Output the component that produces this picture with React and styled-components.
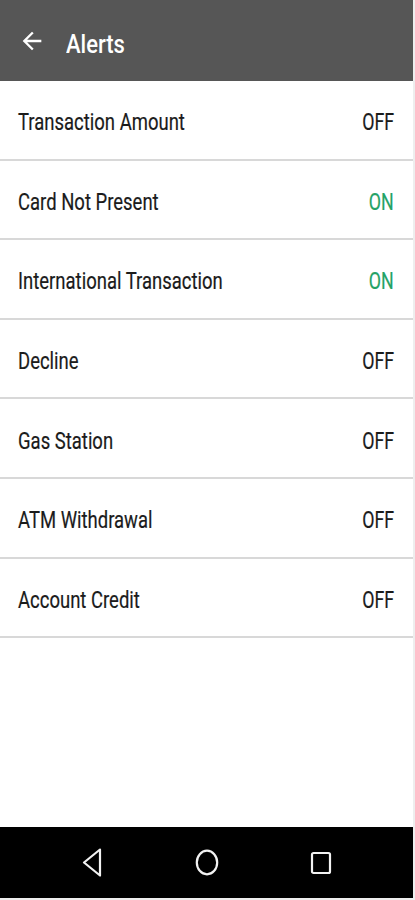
import React from 'react';
import styled, { createGlobalStyle } from 'styled-components';

const GlobalStyle = createGlobalStyle`
    html, body {
        margin: 0;
        padding: 0;
        background: #eeeeee;
    }
    body {
        font-family: Roboto, "Noto Sans", "Liberation Sans", sans-serif;
    }
`;

const Screen = styled.div`
    width: 413px;
    height: 898px;
    background: #ffffff;
    display: flex;
    flex-direction: column;
    overflow: hidden;
`;

const Toolbar = styled.header`
    height: 81px;
    flex-shrink: 0;
    background: #565656;
    display: flex;
    align-items: center;
    padding-left: 18px;
`;

const BackButton = styled.button`
    border: none;
    background: transparent;
    padding: 0;
    width: 28px;
    height: 28px;
    display: flex;
    color: #ffffff;
    cursor: pointer;
`;

const Title = styled.h1`
    margin: 0 0 0 20px;
    font-size: 25px;
    font-weight: 500;
    color: #ffffff;
    transform: scaleX(0.88);
    transform-origin: left center;
    line-height: 1;
    padding-top: 8px;
`;

const List = styled.ul`
    list-style: none;
    margin: 0;
    padding: 0;
`;

const Row = styled.li`
    height: 77.6px;
    border-bottom: 2px solid #d8d8d8;
    display: flex;
    align-items: center;
    justify-content: space-between;
    padding: 0 19px 0 18px;
`;

const Label = styled.span`
    display: inline-block;
    margin-top: 5px;
    font-size: 24px;
    color: #1b1b1b;
    transform: scaleX(0.77);
    transform-origin: left center;
    white-space: nowrap;
    -webkit-text-stroke: 0.2px currentColor;
`;

const Status = styled.span`
    display: inline-block;
    margin-top: 5px;
    font-size: 24px;
    color: ${props => props.on ? '#24a266' : '#1b1b1b'};
    transform: scaleX(0.74);
    transform-origin: right center;
    -webkit-text-stroke: 0.2px currentColor;
`;

const Spacer = styled.div`
    flex: 1;
`;

const NavBar = styled.nav`
    height: 71px;
    flex-shrink: 0;
    background: #000000;
    display: grid;
    grid-template-columns: repeat(3, 114.5px);
    justify-content: center;
    align-items: center;
`;

const NavKey = styled.div`
    display: flex;
    justify-content: center;
    align-items: center;
`;

const alerts = [
    { name: 'Transaction Amount', on: false },
    { name: 'Card Not Present', on: true },
    { name: 'International Transaction', on: true },
    { name: 'Decline', on: false },
    { name: 'Gas Station', on: false },
    { name: 'ATM Withdrawal', on: false },
    { name: 'Account Credit', on: false },
];

const App = () => {
    return (
        <>
            <GlobalStyle />
            <Screen>
                <Toolbar>
                    <BackButton aria-label="Back">
                        <svg width="28" height="28" viewBox="0 0 24 24" fill="currentColor">
                            <path d="M20 11H7.83l5.59-5.59L12 4l-8 8 8 8 1.41-1.41L7.83 13H20v-2z" />
                        </svg>
                    </BackButton>
                    <Title>Alerts</Title>
                </Toolbar>
                <List>
                    {alerts.map(a => (
                        <Row key={a.name}>
                            <Label>{a.name}</Label>
                            <Status on={a.on ? 1 : 0}>{a.on ? 'ON' : 'OFF'}</Status>
                        </Row>
                    ))}
                </List>
                <Spacer />
                <NavBar>
                    <NavKey>
                        <svg width="20" height="29" viewBox="0 0 20 29" fill="none" stroke="#f2f2f2" strokeWidth="2.2" strokeLinejoin="round">
                            <polygon points="18,1.5 2,14.5 18,27.5" />
                        </svg>
                    </NavKey>
                    <NavKey>
                        <svg width="24" height="27" viewBox="0 0 24 27" fill="none" stroke="#f2f2f2" strokeWidth="2.2">
                            <ellipse cx="12" cy="13.5" rx="10.2" ry="11.8" />
                        </svg>
                    </NavKey>
                    <NavKey>
                        <svg width="22" height="24" viewBox="0 0 22 24" fill="none" stroke="#f2f2f2" strokeWidth="2.2">
                            <rect x="2" y="2" width="18" height="20" rx="1.5" />
                        </svg>
                    </NavKey>
                </NavBar>
            </Screen>
        </>
    );
};

export default App;
